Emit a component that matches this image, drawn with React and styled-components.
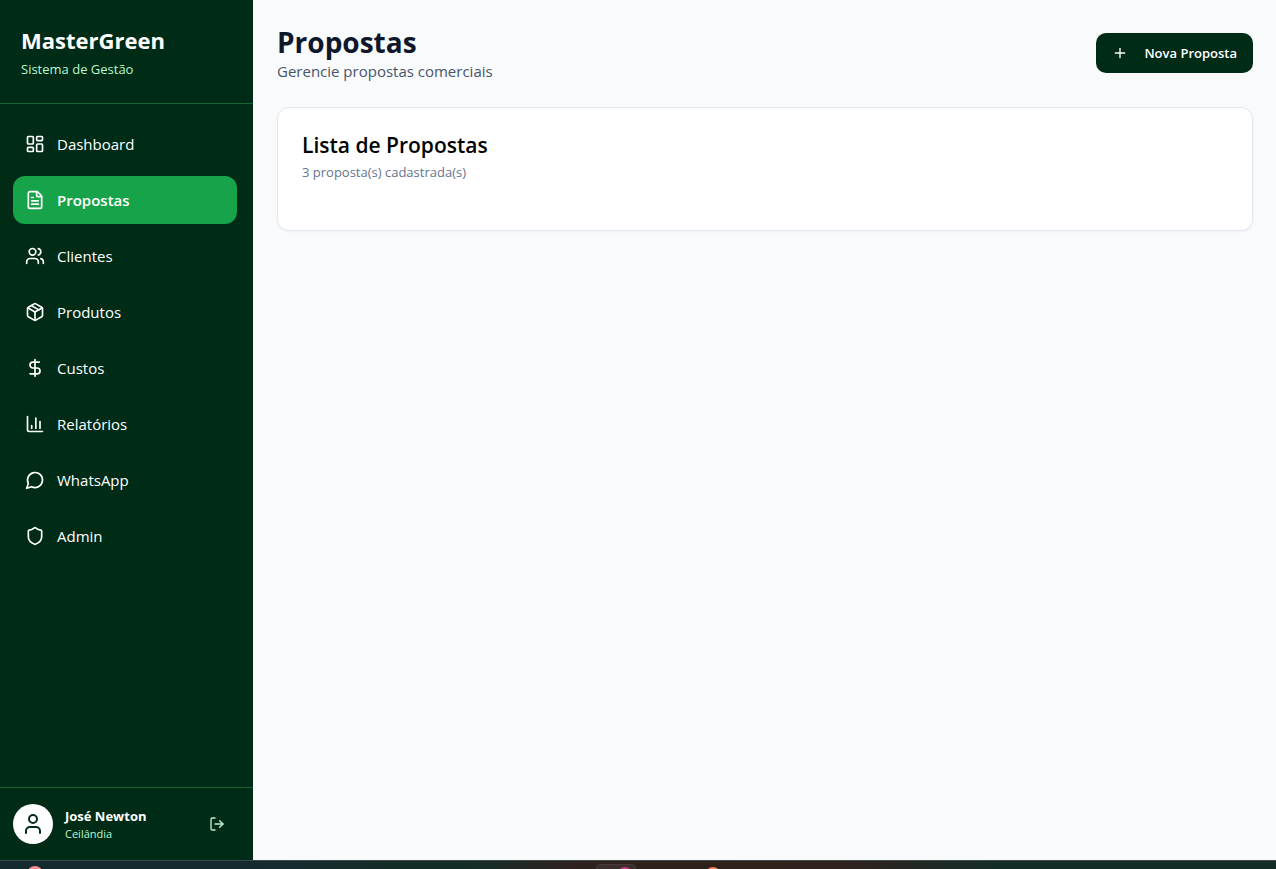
import React from "react";
import styled, { createGlobalStyle } from "styled-components";
import {
  LayoutDashboard,
  FileText,
  Users,
  Package,
  DollarSign,
  ChartColumn,
  Shield,
  User,
  LogOut,
  Plus,
} from "lucide-react";

const GlobalStyle = createGlobalStyle`
  *, *::before, *::after { box-sizing: border-box; }
  body {
    margin: 0;
    background: #f8fafc;
    font-family: "Open Sans", "Noto Sans", sans-serif;
  }
  h1, h2, p, ul { margin: 0; padding: 0; }
  ul { list-style: none; }
  button { font: inherit; border: 0; cursor: pointer; }
`;

const Screen = styled.div`
  display: flex;
  flex-direction: column;
  height: 100vh;
`;

const Layout = styled.div`
  display: flex;
  flex: 1;
  min-height: 0;
`;

const Sidebar = styled.aside`
  display: flex;
  flex-direction: column;
  flex: 0 0 253px;
  background: #002b17;
  color: #fff;
`;

const Brand = styled.div`
  padding: 24px 21px;
  border-bottom: 1px solid #166534;
`;

const BrandName = styled.p`
  font-size: 22px;
  line-height: 32px;
  font-weight: 700;
`;

const BrandNote = styled.p`
  padding-top: 4px;
  font-size: 13px;
  line-height: 19px;
  color: #bbf7d0;
`;

const Nav = styled.nav`
  flex: 1;
  padding: 16px 16px 16px 13px;
`;

const NavList = styled.ul`
  display: flex;
  flex-direction: column;
  gap: 8px;
`;

const NavLink = styled.a`
  display: flex;
  align-items: center;
  gap: 12px;
  height: 48px;
  padding: 0 12px;
  border-radius: 12px;
  font-size: 15px;
  line-height: 24px;
  font-weight: ${(p) => (p.$active ? 600 : 400)};
  background: ${(p) => (p.$active ? "#16a34a" : "transparent")};
  color: #fff;
  text-decoration: none;
`;

const Account = styled.div`
  display: flex;
  align-items: center;
  gap: 12px;
  padding: 16px 16px 16px 13px;
  border-top: 1px solid #166534;
`;

const Avatar = styled.span`
  display: grid;
  place-items: center;
  width: 40px;
  height: 40px;
  border-radius: 50%;
  background: #fff;
  color: #002b17;
`;

const AccountText = styled.div`
  flex: 1;
`;

const AccountName = styled.p`
  font-size: 13px;
  line-height: 20px;
  font-weight: 700;
`;

const AccountPlace = styled.p`
  font-size: 11px;
  line-height: 16px;
  color: #bbf7d0;
`;

const IconButton = styled.button`
  display: grid;
  place-items: center;
  width: 40px;
  height: 36px;
  padding: 0;
  background: transparent;
  color: #bbf7d0;
`;

const Main = styled.main`
  flex: 1;
  min-width: 0;
  padding: 24px 23px 24px 24px;
`;

const PageHeader = styled.header`
  display: flex;
  align-items: center;
  justify-content: space-between;
  padding-bottom: 25px;
`;

const PageTitle = styled.h1`
  font-size: 28px;
  line-height: 36px;
  font-weight: 700;
  color: #0f172a;
`;

const PageNote = styled.p`
  font-size: 15px;
  line-height: 22px;
  color: #475569;
`;

const PrimaryButton = styled.button`
  display: flex;
  align-items: center;
  gap: 16px;
  height: 40px;
  padding: 0 16px;
  border-radius: 10px;
  background: #002b17;
  color: #fff;
  font-size: 13px;
  line-height: 20px;
  font-weight: 600;
`;

const Card = styled.section`
  min-height: 124px;
  padding: 24px;
  border: 1px solid #e2e8f0;
  border-radius: 12px;
  background: #fff;
  box-shadow: 0 1px 2px rgba(0, 0, 0, 0.05);
`;

const CardTitle = styled.h2`
  font-size: 21px;
  line-height: 26px;
  font-weight: 600;
  color: #000;
`;

const CardNote = styled.p`
  font-size: 13px;
  line-height: 28px;
  color: #64748b;
`;

const Taskbar = styled.footer`
  display: grid;
  grid-template-columns: 46% 1fr;
  height: 9px;
  overflow: hidden;
  border-top: 1px solid #3f4c49;
  background: linear-gradient(90deg, #152a2f 0%, #152a2f 20%, #142c28 30%, #142c28 37%, #2d211f 45%, #2e2119 55%, #30221f 66%, #142c28 78%, #142c28 100%);
`;

const TaskbarArt = styled.svg`
  display: block;
`;

function ChatBubble({ size }) {
  return (
    <svg
      width={size}
      height={size}
      viewBox="0 0 24 24"
      fill="none"
      stroke="currentColor"
      strokeWidth="2"
      strokeLinecap="round"
      strokeLinejoin="round"
      aria-hidden="true"
    >
      <path d="M7.9 20A9 9 0 1 0 4 16.1L2 22Z" />
    </svg>
  );
}

const items = [
  { label: "Dashboard", Icon: LayoutDashboard },
  { label: "Propostas", Icon: FileText, active: true },
  { label: "Clientes", Icon: Users },
  { label: "Produtos", Icon: Package },
  { label: "Custos", Icon: DollarSign },
  { label: "Relatórios", Icon: ChartColumn },
  { label: "WhatsApp", Icon: ChatBubble },
  { label: "Admin", Icon: Shield },
];

export default function App() {
  return (
    <Screen>
      <GlobalStyle />
      <Layout>
        <Sidebar>
          <Brand>
            <BrandName>MasterGreen</BrandName>
            <BrandNote>Sistema de Gestão</BrandNote>
          </Brand>
          <Nav>
            <NavList>
              {items.map(({ label, Icon, active }) => (
                <li key={label}>
                  <NavLink href="#" $active={active} aria-current={active ? "page" : undefined}>
                    <Icon size={20} />
                    {label}
                  </NavLink>
                </li>
              ))}
            </NavList>
          </Nav>
          <Account>
            <Avatar>
              <User size={24} />
            </Avatar>
            <AccountText>
              <AccountName>José Newton</AccountName>
              <AccountPlace>Ceilândia</AccountPlace>
            </AccountText>
            <IconButton type="button" aria-label="Sair">
              <LogOut size={16} />
            </IconButton>
          </Account>
        </Sidebar>
        <Main>
          <PageHeader>
            <div>
              <PageTitle>Propostas</PageTitle>
              <PageNote>Gerencie propostas comerciais</PageNote>
            </div>
            <PrimaryButton type="button">
              <Plus size={16} />
              Nova Proposta
            </PrimaryButton>
          </PageHeader>
          <Card>
            <CardTitle>Lista de Propostas</CardTitle>
            <CardNote>3 proposta(s) cadastrada(s)</CardNote>
          </Card>
        </Main>
      </Layout>
      <Taskbar>
        <TaskbarArt width="80" height="8" aria-hidden="true">
          <circle cx="35" cy="13" r="8" fill="#fb8c94" />
        </TaskbarArt>
        <TaskbarArt width="150" height="8" aria-hidden="true">
          <rect x="9.5" y="3.5" width="39" height="20" rx="4" fill="#3b2f2e" stroke="#463b38" />
          <circle cx="38" cy="13" r="7" fill="#d63384" />
          <circle cx="126" cy="14" r="8" fill="#f9805a" />
        </TaskbarArt>
      </Taskbar>
    </Screen>
  );
}
